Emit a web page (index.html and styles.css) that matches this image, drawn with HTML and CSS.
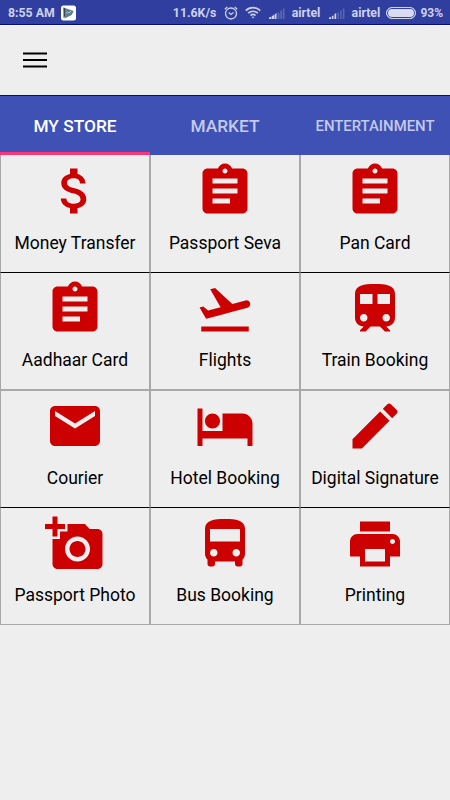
FILE: index.html
```html
<!DOCTYPE html>
<html lang="en">
<head>
    <meta charset="UTF-8">
    <meta name="viewport" content="width=device-width, initial-scale=1.0">
    <title>My Store</title>
    <link rel="stylesheet" href="styles.css">
</head>
<body>
    <!-- Status bar -->
    <div class="status-bar">
        <span class="time">8:55 AM</span>
        <svg class="app-icon" width="15" height="16" viewBox="0 0 15 16">
            <rect x="0" y="0.5" width="15" height="15" rx="2.5" fill="#fff"/>
            <path d="M2.5 2.500L12.700 6l-2 4-7.200 3.500z" fill="#607d8b"/>
            <path d="M2.500 2.500l1.500 .5v8l-1.500 2z" fill="#37474f"/>
            <path d="M5 8.500l1.500-1.500 1.500 1L10 6" fill="none" stroke="#b3e5fc" stroke-width=".8"/>
        </svg>
        <span class="speed">11.6K/s</span>
        <svg class="alarm" width="14" height="14" viewBox="0 0 14 14" fill="none" stroke="#ced2ea" stroke-width="1.300">
            <circle cx="7" cy="7.500" r="5.500"/>
            <path d="M4.700 6.500L7 8.500l2.500-2M.8 3.200L3.300 1M13.200 3.200L10.700 1"/>
        </svg>
        <svg class="wifi" width="16" height="13" viewBox="0 0 16 13" fill="none" stroke="#ced2ea" stroke-width="1.700">
            <path d="M.8 4.600c4-3.900 10.400-3.900 14.400 0M3.200 7.200c2.700-2.600 6.900-2.600 9.600 0M5.500 9.500c1.400-1.300 3.600-1.300 5 0"/>
            <path d="M6.500 10.700h3L8 12.500z" fill="#ced2ea" stroke="none"/>
        </svg>
        <svg class="signal" width="16" height="11" viewBox="0 0 16 11">
            <path d="M0 11V9.500L2.500 8.500V11zM3 11V8l2-1v4zM5.500 11V6.500L7.500 5v6z" fill="#ced2ea"/>
            <path d="M8.500 11V4.500h2V11zM11.200 11V2.500h1.800V11zM13.800 11V.5h1.700V11z" fill="#5966b2"/>
        </svg>
        <span class="carrier">airtel</span>
        <svg class="signal" width="16" height="11" viewBox="0 0 16 11">
            <path d="M0 11V9.500L2 9v2zM2.800 11V8l1.700-.5V11zM5.500 11V6l1.700-1v6z" fill="#ced2ea"/>
            <path d="M8.500 11V4.500h1.500V11zM11.200 11V2.500h1.500V11zM13.900 11V.5h1.500V11z" fill="#5966b2"/>
        </svg>
        <span class="carrier">airtel</span>
        <span class="battery"></span>
        <span class="percent">93%</span>
    </div>

    <!-- Toolbar -->
    <div class="toolbar">
        <svg class="menu-icon" width="24" height="16" viewBox="0 0 24 16">
            <path d="M0 .6h24v2H0zM0 7.100h24v2H0zM0 13.600h24v2H0z"/>
        </svg>
    </div>

    <!-- Tabs -->
    <div class="tabs">
        <div class="tab active">MY STORE</div>
        <div class="tab">MARKET</div>
        <div class="tab small">ENTERTAINMENT</div>
    </div>

    <!-- Services -->
    <div class="grid">
        <div class="cell">
            <svg viewBox="0 0 24 24"><path d="M11.8 10.9c-2.270-.59-3-1.200-3-2.150 0-1.090 1.010-1.850 2.700-1.850 1.780 0 2.440.85 2.500 2.100h2.210c-.07-1.720-1.120-3.300-3.210-3.810V3h-3v2.160c-1.940.42-3.500 1.680-3.500 3.610 0 2.310 1.910 3.460 4.700 4.130 2.500.6 3 1.480 3 2.410 0 .69-.49 1.790-2.700 1.790-2.060 0-2.870-.92-2.980-2.100h-2.200c.12 2.190 1.760 3.420 3.680 3.830V21h3v-2.150c1.950-.37 3.500-1.500 3.500-3.550 0-2.840-2.430-3.810-4.700-4.400z"/></svg>
            <span>Money Transfer</span>
        </div>
        <div class="cell">
            <svg viewBox="0 0 24 24"><path d="M19 3h-4.180C14.400 1.840 13.300 1 12 1c-1.300 0-2.400.84-2.820 2H5c-1.100 0-2 .9-2 2v14c0 1.100.9 2 2 2h14c1.100 0 2-.9 2-2V5c0-1.100-.9-2-2-2zm-7 0c.55 0 1 .45 1 1s-.45 1-1 1-1-.45-1-1 .45-1 1-1zm2 14H7v-2h7v2zm3-4H7v-2h10v2zm0-4H7V7h10v2z"/></svg>
            <span>Passport Seva</span>
        </div>
        <div class="cell">
            <svg viewBox="0 0 24 24"><path d="M19 3h-4.180C14.400 1.840 13.300 1 12 1c-1.300 0-2.400.84-2.820 2H5c-1.100 0-2 .9-2 2v14c0 1.100.9 2 2 2h14c1.100 0 2-.9 2-2V5c0-1.100-.9-2-2-2zm-7 0c.55 0 1 .45 1 1s-.45 1-1 1-1-.45-1-1 .45-1 1-1zm2 14H7v-2h7v2zm3-4H7v-2h10v2zm0-4H7V7h10v2z"/></svg>
            <span>Pan Card</span>
        </div>
        <div class="cell">
            <svg viewBox="0 0 24 24"><path d="M19 3h-4.180C14.400 1.840 13.300 1 12 1c-1.300 0-2.400.84-2.820 2H5c-1.100 0-2 .9-2 2v14c0 1.100.9 2 2 2h14c1.100 0 2-.9 2-2V5c0-1.100-.9-2-2-2zm-7 0c.55 0 1 .45 1 1s-.45 1-1 1-1-.45-1-1 .45-1 1-1zm2 14H7v-2h7v2zm3-4H7v-2h10v2zm0-4H7V7h10v2z"/></svg>
            <span>Aadhaar Card</span>
        </div>
        <div class="cell">
            <svg viewBox="0 0 24 24"><path d="M2.500 19h19v2h-19zm19.570-9.360c-.21-.8-1.040-1.280-1.840-1.060L14.920 10l-6.900-6.430-1.930.51 4.140 7.170-4.970 1.330-1.970-1.540-1.450.39 1.820 3.160.77 1.330 1.600-.43 5.310-1.420 4.350-1.160L21 11.490c.81-.23 1.280-1.050 1.070-1.850z"/></svg>
            <span>Flights</span>
        </div>
        <div class="cell">
            <svg viewBox="0 0 24 24"><path d="M12 2c-4.420 0-8 .5-8 4v9.500C4 17.430 5.570 19 7.500 19L6 20.500v.5h2.230l2-2H14l2 2h2v-.5L16.500 19c1.930 0 3.500-1.570 3.500-3.500V6c0-3.500-3.580-4-8-4zM7.500 17c-.83 0-1.500-.67-1.500-1.500S6.670 14 7.500 14s1.500.67 1.500 1.500S8.330 17 7.500 17zm3.500-7H6V6h5v4zm2 0V6h5v4h-5zm3.500 7c-.83 0-1.500-.67-1.500-1.500s.67-1.500 1.500-1.500 1.500.67 1.500 1.500-.67 1.500-1.500 1.500z"/></svg>
            <span>Train Booking</span>
        </div>
        <div class="cell">
            <svg viewBox="0 0 24 24"><path d="M20 4H4c-1.100 0-1.990.9-1.990 2L2 18c0 1.100.9 2 2 2h16c1.100 0 2-.9 2-2V6c0-1.100-.9-2-2-2zm0 4l-8 5-8-5V6l8 5 8-5v2z"/></svg>
            <span>Courier</span>
        </div>
        <div class="cell">
            <svg viewBox="0 0 24 24"><path d="M7 13c1.660 0 3-1.340 3-3S8.660 7 7 7s-3 1.340-3 3 1.340 3 3 3zm12-6h-8v7H3V5H1v15h2v-3h18v3h2v-9c0-2.210-1.790-4-4-4z"/></svg>
            <span>Hotel Booking</span>
        </div>
        <div class="cell">
            <svg viewBox="0 0 24 24"><path d="M3 17.250V21h3.750L17.810 9.940l-3.750-3.750L3 17.250zM20.710 7.040c.39-.39.39-1.020 0-1.410l-2.340-2.340c-.39-.39-1.020-.39-1.410 0l-1.830 1.830 3.750 3.750 1.830-1.830z"/></svg>
            <span>Digital Signature</span>
        </div>
        <div class="cell">
            <svg viewBox="0 0 24 24"><path d="M3 4V1h2v3h3v2H5v3H3V6H0V4h3zm3 6V7h3V4h7l1.830 2H21c1.100 0 2 .9 2 2v12c0 1.100-.9 2-2 2H5c-1.100 0-2-.9-2-2V10h3zm7 9c2.760 0 5-2.240 5-5s-2.240-5-5-5-5 2.240-5 5 2.240 5 5 5zm-3.200-5c0 1.770 1.430 3.200 3.200 3.200s3.200-1.430 3.200-3.200-1.430-3.200-3.200-3.200-3.200 1.430-3.200 3.200z"/></svg>
            <span>Passport Photo</span>
        </div>
        <div class="cell">
            <svg viewBox="0 0 24 24"><path d="M4 16c0 .88.39 1.670 1 2.220V20c0 .55.45 1 1 1h1c.55 0 1-.45 1-1v-1h8v1c0 .55.45 1 1 1h1c.55 0 1-.45 1-1v-1.780c.61-.55 1-1.340 1-2.220V6c0-3.500-3.580-4-8-4s-8 .5-8 4v10zm3.500 1c-.83 0-1.500-.67-1.500-1.500S6.670 14 7.500 14s1.500.67 1.500 1.500S8.330 17 7.500 17zm9 0c-.83 0-1.500-.67-1.500-1.500s.67-1.500 1.500-1.500 1.500.67 1.500 1.500-.67 1.500-1.500 1.500zm1.500-6H6V6h12v5z"/></svg>
            <span>Bus Booking</span>
        </div>
        <div class="cell">
            <svg viewBox="0 0 24 24"><path d="M19 8H5c-1.660 0-3 1.340-3 3v6h4v4h12v-4h4v-6c0-1.660-1.340-3-3-3zm-3 11H8v-5h8v5zm3-7c-.55 0-1-.45-1-1s.45-1 1-1 1 .45 1 1-.45 1-1 1zm-1-9H6v4h12V3z"/></svg>
            <span>Printing</span>
        </div>
    </div>
</body>
</html>
```
FILE: styles.css
```css
* {
    box-sizing: border-box;
}
body {
    font-family: Roboto, "Liberation Sans", sans-serif;
    margin: 0;
    padding: 0;
    background-color: #eeeeee;
    color: #000;
}
.status-bar {
    display: flex;
    align-items: center;
    height: 25px;
    padding: 1px 7px 0 8px;
    background-color: #303f9f;
    border-bottom: 1px solid #000c8c;
    color: #ced2ea;
    font-size: 12.3px;
    font-weight: 700;
    white-space: nowrap;
}
.status-bar svg {
    flex: none;
}
.time {
    width: 53px;
}
.speed {
    width: 51px;
    margin-left: 97px;
}
.wifi {
    margin-left: 7px;
}
.signal {
    margin: 2px 7px 0 8px;
}
.carrier {
    width: 29px;
}
.battery {
    width: 30px;
    height: 12px;
    margin-left: 6px;
    border: 1px solid #ced2ea;
    border-radius: 6px;
    background: #d9dcf0;
    box-shadow: inset 0 0 0 1px #303f9f;
}
.percent {
    margin-left: 4px;
    font-size: 12px;
}
.toolbar {
    display: flex;
    align-items: center;
    height: 70px;
    padding: 0 0 2px 23px;
    border-top: 1px solid #fafafa;
}
.tabs {
    display: flex;
    height: 60px;
    background-color: #3f51b5;
    border-top: 1px solid #000c8c;
}
.tab {
    flex: 1;
    display: flex;
    align-items: center;
    justify-content: center;
    padding-top: 3px;
    border-bottom: 3px solid transparent;
    color: #c5cae9;
    font-size: 17.3px;
    font-weight: 500;
}
.tab.active {
    color: #fff;
    border-bottom-color: #ff3377;
}
.tab.small {
    font-size: 14.9px;
}
.grid {
    display: grid;
    grid-template-columns: repeat(3, 1fr);
    grid-template-rows: 118px 117px 118px 117px;
}
.cell {
    display: flex;
    flex-direction: column;
    align-items: center;
    padding-top: 6px;
    border-left: 1px solid #a8a8a8;
    border-right: 1px solid #a8a8a8;
    font-size: 17.5px;
    line-height: 20px;
    white-space: nowrap;
}
.cell svg {
    width: 60px;
    height: 60px;
    fill: #cc0000;
}
.cell span {
    margin-top: 12px;
}
/* row separators */
.cell:nth-child(-n+3) {
    border-bottom: 1px solid #000;
}
.cell:nth-child(n+4):nth-child(-n+6) {
    border-bottom: 1px solid #a8a8a8;
    padding-top: 5.5px;
}
.cell:nth-child(n+7):nth-child(-n+9) {
    border-top: 1px solid #a8a8a8;
    border-bottom: 1px solid #000;
    padding-top: 5px;
}
.cell:nth-child(n+10) {
    border-bottom: 1px solid #a8a8a8;
    padding-top: 5.5px;
}
.cell:nth-child(n+4):nth-child(-n+6) span,
.cell:nth-child(n+10) span {
    margin-top: 11px;
}
```
